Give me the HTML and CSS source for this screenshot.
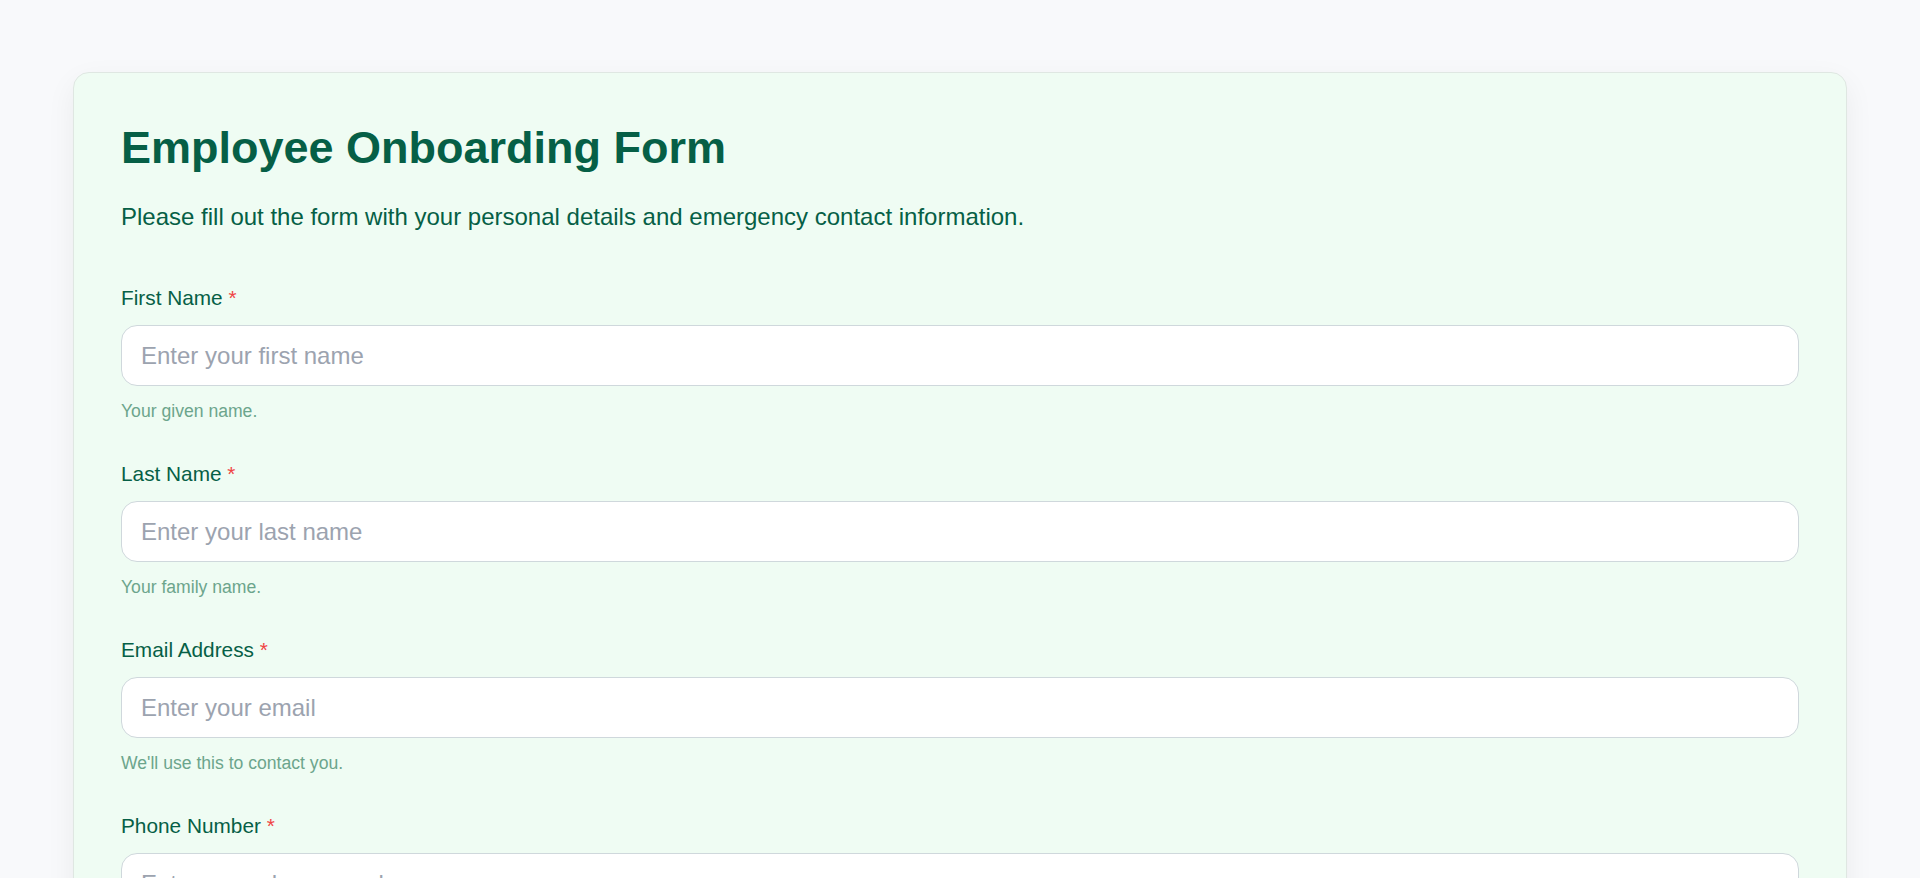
FILE: index.html
```html
<!DOCTYPE html>
<html lang="en">
<head>
<meta charset="utf-8">
<title>Employee Onboarding Form</title>
<link rel="stylesheet" href="styles.css">
</head>
<body>
<main class="page">
  <form class="card">
    <h1 class="title">Employee Onboarding Form</h1>
    <p class="subtitle">Please fill out the form with your personal details and emergency contact information.</p>

    <div class="field">
      <label class="label" for="first">First Name <span class="req">*</span></label>
      <input class="input" id="first" type="text" placeholder="Enter your first name">
      <p class="help">Your given name.</p>
    </div>

    <div class="field">
      <label class="label" for="last">Last Name <span class="req">*</span></label>
      <input class="input" id="last" type="text" placeholder="Enter your last name">
      <p class="help">Your family name.</p>
    </div>

    <div class="field">
      <label class="label" for="email">Email Address <span class="req">*</span></label>
      <input class="input" id="email" type="email" placeholder="Enter your email">
      <p class="help">We'll use this to contact you.</p>
    </div>

    <div class="field">
      <label class="label" for="phone">Phone Number <span class="req">*</span></label>
      <input class="input" id="phone" type="tel" placeholder="Enter your phone number">
      <p class="help">Include country code if outside the US.</p>
    </div>
  </form>
</main>
</body>
</html>
```

FILE: styles.css
```css
* {
  box-sizing: border-box;
}

html, body {
  margin: 0;
  padding: 0;
}

body {
  background: #f8f9fb;
  font-family: "Liberation Sans", Arial, sans-serif;
  color: #065f46;
}

.page {
  padding: 72px 73px;
}

.card {
  background: #effcf3;
  border: 1px solid #dfe7e2;
  border-radius: 16px;
  box-shadow: 0 10px 30px rgba(15, 23, 42, 0.06);
  padding: 48px 47px 48px;
}

.title {
  margin: 0 0 24px;
  font-size: 45px;
  line-height: 54px;
  font-weight: 700;
  color: #065f46;
}

.subtitle {
  margin: 0 0 51px;
  font-size: 24px;
  line-height: 36px;
  color: #065f46;
}

.field {
  margin-bottom: 40px;
}

.label {
  display: block;
  margin-bottom: 15px;
  font-size: 20.8px;
  line-height: 24px;
  color: #065f46;
}

.req {
  color: #ef4444;
}

.input {
  display: block;
  width: 100%;
  height: 61px;
  padding: 0 19px;
  border: 1px solid #cfd8dc;
  border-radius: 16px;
  background: #ffffff;
  font-family: "Liberation Sans", Arial, sans-serif;
  font-size: 24px;
  color: #1f2937;
  outline: none;
}

.input::placeholder {
  color: #9ca3af;
}

.help {
  margin: 14px 0 0;
  font-size: 17.6px;
  line-height: 22px;
  color: #6ca58c;
}
```
